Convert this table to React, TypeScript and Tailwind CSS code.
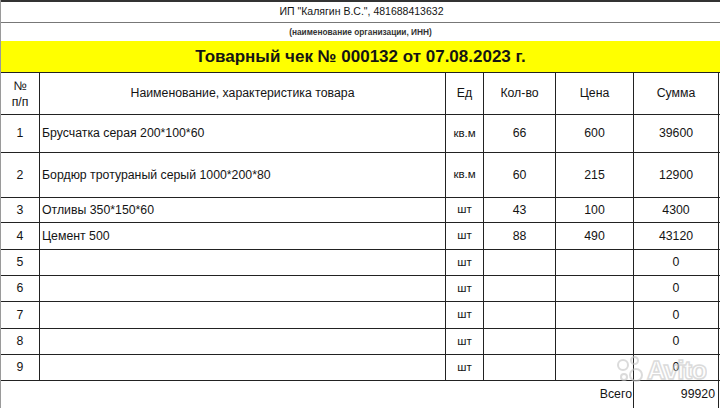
// Товарный чек — spreadsheet-style receipt, printed from Excel.

const cols = 'grid grid-cols-[39px_406px_38px_72px_78px_85px]';
const cell = 'border-r border-[#222] flex items-center';

interface Row { n: number; name: string; unit: string; qty: string; price: string; sum: string; h: string }

const rows: Row[] = [
  { n: 1, name: 'Брусчатка серая 200*100*60', unit: 'кв.м', qty: '66', price: '600', sum: '39600', h: 'h-[38px]' },
  { n: 2, name: 'Бордюр тротураный серый 1000*200*80', unit: 'кв.м', qty: '60', price: '215', sum: '12900', h: 'h-[45px]' },
  { n: 3, name: 'Отливы 350*150*60', unit: 'шт', qty: '43', price: '100', sum: '4300', h: 'h-[25px]' },
  { n: 4, name: 'Цемент 500', unit: 'шт', qty: '88', price: '490', sum: '43120', h: 'h-[27px]' },
  { n: 5, name: '', unit: 'шт', qty: '', price: '', sum: '0', h: 'h-[26px]' },
  { n: 6, name: '', unit: 'шт', qty: '', price: '', sum: '0', h: 'h-[26px]' },
  { n: 7, name: '', unit: 'шт', qty: '', price: '', sum: '0', h: 'h-[27px]' },
  { n: 8, name: '', unit: 'шт', qty: '', price: '', sum: '0', h: 'h-[26px]' },
  { n: 9, name: '', unit: 'шт', qty: '', price: '', sum: '0', h: 'h-[26px]' },
];

// faint marketplace watermark over the bottom-right corner
function AvitoMark() {
  return (
    <div className="absolute left-[616px] top-[356px] flex items-center gap-[4px] pointer-events-none opacity-60">
      <div className="relative w-[26px] h-[28px]">
        <span className="absolute left-0 top-[3px] w-[12px] h-[12px] rounded-full border-2 border-[#c4c4c4]" />
        <span className="absolute left-[13px] top-0 w-[9px] h-[9px] rounded-full border-2 border-[#c4c4c4]" />
        <span className="absolute left-[3px] top-[17px] w-[8px] h-[8px] rounded-full border-2 border-[#c4c4c4]" />
        <span className="absolute left-[12px] top-[12px] w-[14px] h-[14px] rounded-full border-2 border-[#c4c4c4]" />
      </div>
      <span className="text-[26px] font-bold text-transparent [-webkit-text-stroke:1.5px_#c4c4c4] leading-none tracking-[-1px]">Avito</span>
    </div>
  );
}

export default function App() {
  return (
    <div className="relative w-[720px] h-[408px] overflow-hidden bg-white text-[#141414] border-l border-[#9a9a9a] font-['Liberation_Sans',Arial,sans-serif]">
      <div className="h-[23px] border-t-2 border-b border-t-[#333] border-b-[#777] flex items-center justify-center text-[10.5px] pl-[2px]">
        ИП "Калягин В.С.", 481688413632
      </div>
      <div className="h-[18px] flex items-center justify-center text-[8.3px] font-bold text-[#333]">
        (наименование организации, ИНН)
      </div>
      <div className="h-[32px] bg-[#ffff00] border-b border-[#222] flex items-center justify-center text-[17px] font-bold">
        Товарный чек № 000132 от 07.08.2023 г.
      </div>

      <div className={`${cols} h-[42px] border-b border-[#222] text-[12.3px]`}>
        <div className={`${cell} justify-center text-center leading-[16px]`}>№<br />п/п</div>
        <div className={`${cell} justify-center`}>Наименование, характеристика товара</div>
        <div className={`${cell} justify-center`}>Ед</div>
        <div className={`${cell} justify-center`}>Кол-во</div>
        <div className={`${cell} justify-center`}>Цена</div>
        <div className={`${cell} justify-center`}>Сумма</div>
      </div>

      {rows.map((r) => (
        <div key={r.n} className={`${cols} ${r.h} border-b border-[#222] text-[12.3px]`}>
          <div className={`${cell} justify-center`}>{r.n}</div>
          <div className={`${cell} pl-[2px]`}>{r.name}</div>
          <div className={`${cell} justify-center text-[11.5px]`}>{r.unit}</div>
          <div className={`${cell} justify-center`}>{r.qty}</div>
          <div className={`${cell} justify-center`}>{r.price}</div>
          <div className={`${cell} justify-center`}>{r.sum}</div>
        </div>
      ))}

      <div className={`${cols} h-[27px] text-[12.3px]`}>
        <div />
        <div />
        <div />
        <div />
        <div className={`${cell} justify-end pr-[1px]`}>Всего</div>
        <div className={`${cell} justify-end pr-[3px]`}>99920</div>
      </div>

      <AvitoMark />
    </div>
  );
}
